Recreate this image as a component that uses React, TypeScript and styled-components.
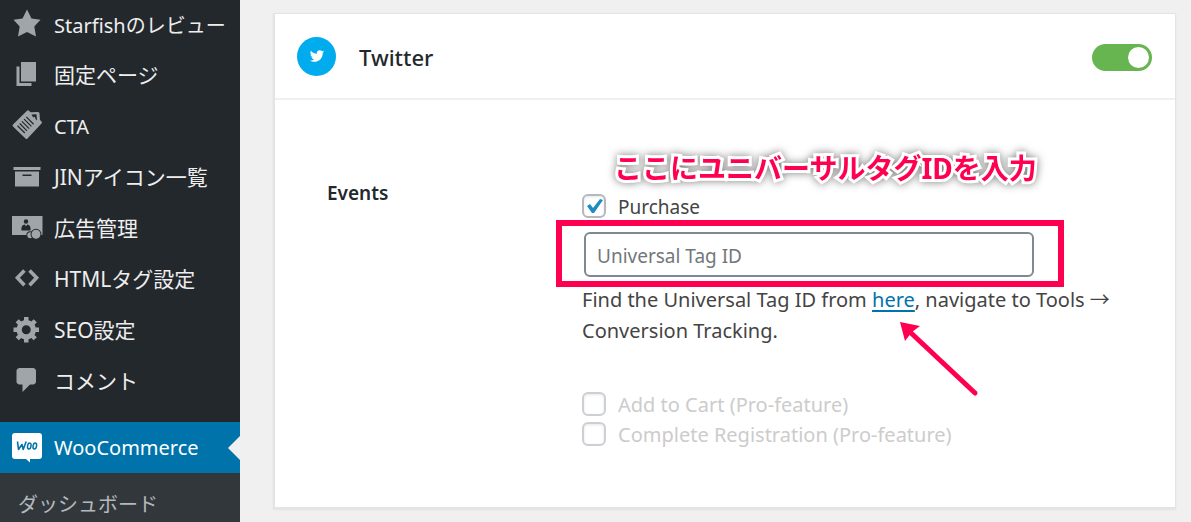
import React from "react";
import styled, { createGlobalStyle } from "styled-components";

const GlobalStyle = createGlobalStyle`
  *, *::before, *::after { box-sizing: border-box; }
  body {
    margin: 0;
    background: #f0f0f0;
    font-family: "Noto Sans", "Noto Sans CJK JP", sans-serif;
    font-size: 19px;
    color: #444;
  }
`;

const Page = styled.div`
  display: flex;
  height: 100vh;
  overflow: hidden;
`;

const Sidebar = styled.nav`
  flex: 0 0 240px;
  background: #23282d;
  overflow: hidden;
`;

const Menu = styled.ul`
  list-style: none;
  margin: -1px 0 0;
  padding: 0;
`;

const MenuGap = styled.li`
  height: 15px;
`;

const MenuLink = styled.a<{ $active?: boolean; $latin?: boolean }>`
  position: relative;
  display: flex;
  align-items: center;
  gap: 12px;
  height: 51px;
  padding-left: 12px;
  white-space: nowrap;
  text-decoration: none;
  font-size: ${(p) => (p.$latin ? 20 : 21)}px;
  color: ${(p) => (p.$active ? "#fff" : "#eee")};
  background: ${(p) => (p.$active ? "#0073aa" : "transparent")};

  &::after {
    content: "";
    display: ${(p) => (p.$active ? "block" : "none")};
    position: absolute;
    right: 0;
    top: 14px;
    border: 12px solid transparent;
    border-left-width: 0;
    border-right-color: #f0f0f0;
  }
`;

const MenuText = styled.span<{ $latin?: boolean }>`
  padding-bottom: ${(p) => (p.$latin ? 0 : 3)}px;
`;

const MenuIcon = styled.svg`
  flex: none;
  width: 30px;
  height: 30px;
  margin-bottom: 3px;
  overflow: visible;
  fill: #a0a5aa;
`;

const SubMenu = styled.div`
  height: 100vh;
  background: #32373c;
`;

const SubLink = styled.a`
  display: block;
  padding: 0 18px;
  font-size: 20px;
  line-height: 64px;
  text-decoration: none;
  color: #b4b9be;
`;

const Main = styled.main`
  flex: 1;
  min-width: 0;
  padding: 13px 15px 0 33px;
`;

const Card = styled.section`
  background: #fff;
  border: solid #e4e4e4;
  border-width: 1px 1px 2px 2px;
  box-shadow: 0 1px 2px rgba(0, 0, 0, 0.06);
`;

const CardHeader = styled.header`
  display: flex;
  align-items: center;
  height: 86px;
  padding: 0 23px 0 22px;
  border-bottom: 2px solid #f0f0f0;
`;

const Badge = styled.span`
  display: flex;
  align-items: center;
  justify-content: center;
  width: 39px;
  height: 39px;
  border-radius: 50%;
  background: #00acee;
`;

const Title = styled.h2`
  flex: 1;
  margin: 2px 0 0 23px;
  font-size: 22px;
  font-weight: 500;
  line-height: 30px;
  color: #23282d;
`;

const Toggle = styled.input`
  appearance: none;
  display: flex;
  align-items: center;
  justify-content: flex-end;
  width: 60px;
  height: 27px;
  margin: 2px 0 0;
  padding: 3px;
  border-radius: 14px;
  background: #66b550;

  &::before {
    content: "";
    width: 21px;
    height: 21px;
    border-radius: 50%;
    background: #fff;
  }
`;

const CardBody = styled.div`
  display: grid;
  grid-template-columns: 255px minmax(0, 530px);
  padding: 91px 20px 58px 52px;
`;

const GroupLabel = styled.h3`
  margin: -11px 0 0;
  font-size: 19px;
  font-weight: 600;
  line-height: 27px;
  color: #23282d;
`;

const Fields = styled.div`
  position: relative;
`;

const CheckRow = styled.label<{ $disabled?: boolean }>`
  display: flex;
  align-items: center;
  gap: 12px;
  height: 30px;
  font-size: ${(p) => (p.$disabled ? 20 : 19)}px;
  color: ${(p) => (p.$disabled ? "#ccc" : "#444")};
`;

const CheckText = styled.span<{ $drop?: boolean }>`
  padding-top: ${(p) => (p.$drop ? 2 : 0)}px;
`;

const CheckBox = styled.input`
  appearance: none;
  flex: none;
  width: 24px;
  height: 24px;
  margin: 0;
  border: 2px solid #b4b9be;
  border-radius: 6px;
  background: #fff;
  box-shadow: inset 0 1px 3px rgba(0, 0, 0, 0.1);

  &:disabled {
    border-color: #ccd0d4;
  }
`;

const CheckHolder = styled.span`
  position: relative;
  display: flex;
`;

const Tick = styled.svg`
  position: absolute;
  inset: 0;
  width: 24px;
  height: 24px;
  fill: #1e8cbe;
`;

const InputFrame = styled.div`
  position: relative;
  max-width: 450px;
  margin: 11px 0 7px 2px;

  &::after {
    content: "";
    position: absolute;
    inset: -12px -30px -10px -28px;
    border: 6px solid #ff0050;
    pointer-events: none;
  }
`;

const TextInput = styled.input`
  display: block;
  width: 100%;
  height: 45px;
  padding: 2px 11px 0;
  border: 2px solid #7e8993;
  border-radius: 6px;
  background: #fff;
  font: inherit;
  color: #32373c;

  &::placeholder {
    color: #72777c;
    opacity: 1;
  }
`;

const Help = styled.p`
  margin: 0 0 43px;
  font-size: 20px;
  line-height: 31px;

  a {
    color: #0073aa;
    text-underline-offset: 3px;
    text-decoration-thickness: 2px;
  }
`;

const Callout = styled.strong`
  position: absolute;
  left: 32px;
  top: -43px;
  font-size: 28px;
  line-height: 40px;
  font-weight: 700;
  white-space: nowrap;
  color: #ff0050;
  -webkit-text-stroke: 6px #fff;
  paint-order: stroke fill;
  stroke-linejoin: round;
  filter: drop-shadow(0 0 4px rgba(0, 0, 0, 0.5));
`;

const Pointer = styled.svg`
  position: absolute;
  left: 316px;
  top: 129px;
  width: 82px;
  height: 78px;
  pointer-events: none;
`;

const icons: Record<string, React.ReactNode> = {
  star: <path d="m10 1 3 6 6 .75-4.12 4.62L16 19l-6-3-6 3 1.13-6.63L1 7.75 7 7z" />,
  page: <path d="M6 15V2h10v13H6zm-1 1h8v2H3V5h2v11z" />,
  archive: <path d="M19 4v2H1V4h18zM2 7h16v10H2V7zm11 3V9H7v1h6z" />,
  code: (
    <path
      d="M8.300 5 3.600 9.900 8.300 14.800M11.700 5 16.400 9.900 11.700 14.800"
      fill="none"
      stroke="#a0a5aa"
      strokeWidth="2.400"
    />
  ),
  gear: (
    <path d="M18 12h-2.18c-.17.7-.44 1.35-.81 1.93l1.54 1.54-2.1 2.1-1.54-1.54c-.58.36-1.23.63-1.91.79V19H8v-2.18c-.68-.16-1.33-.43-1.91-.79l-1.54 1.54-2.12-2.12 1.54-1.54c-.36-.58-.63-1.23-.79-1.91H1V9.03h2.17c.16-.7.44-1.35.8-1.94L2.43 5.55l2.1-2.1 1.54 1.54c.58-.37 1.24-.64 1.93-.81V2h3v2.18c.68.16 1.33.43 1.91.79l1.54-1.54 2.12 2.12-1.54 1.54c.36.59.64 1.24.8 1.94H18V12zm-8.5 1.5c1.66 0 3-1.34 3-3s-1.34-3-3-3-3 1.34-3 3 1.34 3 3 3z" />
  ),
  comment: <path d="M5 2h9c1.1 0 2 .9 2 2v7c0 1.1-.9 2-2 2h-2l-5 5v-5H5c-1.1 0-2-.9-2-2V4c0-1.1.9-2 2-2z" />,
  tag: (
    <g transform="scale(.6667)">
      <path d="M1 14.500 15 .8q1-1 2 0l1.500 1.500 7.500-.3q1.500 0 1.500 1.500L28 10l1.500 1.500q1 1 0 2L15.500 28.500q-1 1-2 0L1 16.500q-1-1 0-2z" />
      <path d="M19.500 4.500l5-.3.500 6.300-1.500-1.500-.5-2-2 .3z" fill="#23282d" />
      <path
        d="M5.500 15.700l7.300 7.300M7.700 13.500l7.300 7.300M9.900 11.300l7.300 7.300M12.100 9.100l7.300 7.300M14.300 6.900l7.300 7.300"
        fill="none"
        stroke="#23282d"
        strokeWidth="1.200"
      />
    </g>
  ),
  ads: (
    <g transform="scale(.6667)">
      <path d="M0 4h30.500v19H0z" />
      <circle cx="14" cy="9.500" r="2.200" fill="#23282d" />
      <path d="M9.500 18.500c-.5-4 1-5.500 3.200-6l1.300 1.800 1.300-1.800c2.200.5 3.700 2 3.200 6z" fill="#23282d" />
      <circle cx="18.300" cy="23.300" r="3.500" stroke="#23282d" />
      <circle cx="24" cy="22.300" r="5" stroke="#23282d" />
    </g>
  ),
  woo: (
    <g transform="translate(0 1.333) scale(.6667)">
      <path d="M3 0h24q3 0 3 3v20q0 3-3 3h-9v3.500L14 26H3q-3 0-3-3V3q0-3 3-3z" fill="#fff" />
      <path
        d="M5.500 8.500l1 8 3.500-5 1.200 5 3-8"
        fill="none"
        stroke="#0073aa"
        strokeWidth="1.600"
        strokeLinejoin="round"
      />
      <ellipse cx="17.300" cy="13" rx="1.700" ry="3" fill="none" stroke="#0073aa" strokeWidth="1.500" transform="rotate(12 17 13)" />
      <ellipse cx="22.800" cy="13" rx="1.700" ry="3" fill="none" stroke="#0073aa" strokeWidth="1.500" transform="rotate(12 23 13)" />
    </g>
  ),
};

const items = [
  { icon: "star", label: "Starfishのレビュー", latin: true },
  { icon: "page", label: "固定ページ" },
  { icon: "tag", label: "CTA", latin: true },
  { icon: "archive", label: "JINアイコン一覧" },
  { icon: "ads", label: "広告管理" },
  { icon: "code", label: "HTMLタグ設定" },
  { icon: "gear", label: "SEO設定" },
  { icon: "comment", label: "コメント" },
];

function Icon({ name }: { name: string }) {
  return (
    <MenuIcon viewBox="0 0 20 20" aria-hidden="true">
      {icons[name]}
    </MenuIcon>
  );
}

export default function App() {
  return (
    <Page lang="ja">
      <GlobalStyle />
      <Sidebar>
        <Menu>
          {items.map((item) => (
            <li key={item.label}>
              <MenuLink href="#" $latin={item.latin}>
                <Icon name={item.icon} />
                <MenuText $latin={item.latin}>{item.label}</MenuText>
              </MenuLink>
            </li>
          ))}
          <MenuGap aria-hidden="true" />
          <li>
            <MenuLink href="#" $active $latin>
              <Icon name="woo" />
              <MenuText $latin>WooCommerce</MenuText>
            </MenuLink>
            <SubMenu>
              <SubLink href="#">ダッシュボード</SubLink>
            </SubMenu>
          </li>
        </Menu>
      </Sidebar>
      <Main>
        <Card>
          <CardHeader>
            <Badge>
              <svg width="16" height="16" viewBox="0 0 20 20" fill="#fff" aria-hidden="true">
                <path d="M18.940 4.460c-.49.73-1.110 1.380-1.830 1.900.01.15.01.31.01.47 0 4.850-3.690 10.440-10.430 10.440-2.070 0-4-.61-5.630-1.650.29.03.58.05.88.05 1.720 0 3.300-.59 4.550-1.570-1.600-.03-2.950-1.090-3.420-2.550.22.04.45.07.69.07.33 0 .66-.05.96-.13-1.670-.34-2.940-1.820-2.940-3.600v-.04c.5.27 1.060.44 1.660.46-.98-.66-1.630-1.780-1.630-3.060 0-.67.18-1.300.5-1.840 1.810 2.220 4.510 3.680 7.560 3.830-.06-.27-.1-.55-.1-.84 0-2.020 1.650-3.660 3.670-3.660 1.060 0 2.010.44 2.680 1.160.83-.17 1.620-.47 2.330-.89-.28.85-.86 1.570-1.620 2.020.75-.08 1.450-.28 2.110-.57z" />
              </svg>
            </Badge>
            <Title>Twitter</Title>
            <Toggle type="checkbox" role="switch" aria-label="Twitter" defaultChecked />
          </CardHeader>
          <CardBody>
            <GroupLabel>Events</GroupLabel>
            <Fields>
              <CheckRow>
                <CheckHolder>
                  <CheckBox type="checkbox" defaultChecked />
                  <Tick viewBox="0 0 24 24" aria-hidden="true">
                    <path d="M5 12l3-2 3 4 7-9 3 1-9 13h-2z" />
                  </Tick>
                </CheckHolder>
                <CheckText $drop>Purchase</CheckText>
              </CheckRow>
              <InputFrame>
                <TextInput type="text" placeholder="Universal Tag ID" aria-label="Universal Tag ID" />
              </InputFrame>
              <Help>
                Find the Universal Tag ID from <a href="#">here</a>, navigate to Tools → Conversion Tracking.
              </Help>
              <CheckRow $disabled>
                <CheckBox type="checkbox" disabled />
                <CheckText>Add to Cart (Pro-feature)</CheckText>
              </CheckRow>
              <CheckRow $disabled>
                <CheckBox type="checkbox" disabled />
                <CheckText>Complete Registration (Pro-feature)</CheckText>
              </CheckRow>
              <Callout>ここにユニバーサルタグIDを入力</Callout>
              <Pointer viewBox="0 0 82 78" aria-hidden="true">
                <path d="M12 12 77 73" stroke="#ff0050" strokeWidth="5" strokeLinecap="round" />
                <path d="M2 2l20 4-8 6-7 9z" fill="#ff0050" />
              </Pointer>
            </Fields>
          </CardBody>
        </Card>
      </Main>
    </Page>
  );
}
